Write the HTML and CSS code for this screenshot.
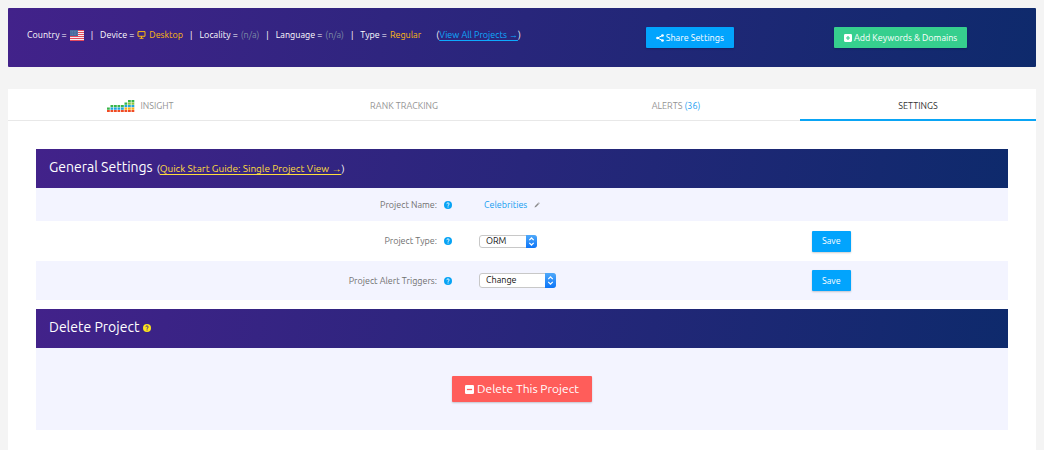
FILE: index.html
```html
<!DOCTYPE html>
<html lang="en">
<head>
<meta charset="utf-8">
<title>Project Settings</title>
<link rel="stylesheet" href="styles.css">
</head>
<body>
<svg class="defs" aria-hidden="true">
  <symbol id="help" viewBox="0 0 16 16"><circle cx="8" cy="8" r="8" fill="currentColor"/><path d="M5.6 6.2C5.7 3 10.4 3.2 10.4 6c0 1.7-2.3 1.9-2.3 3.6M8.1 11v2" fill="none" stroke="var(--mark)" stroke-width="1.9"/></symbol>
  <symbol id="updown" viewBox="0 0 8 10"><path d="M2 3.8 4 1.8l2 2M2 6.2l2 2 2-2" fill="none" stroke="#fff" stroke-width="1.1"/></symbol>
</svg>

<header class="topbar">
  <div class="facts">
    <span class="fact">Country =
      <svg class="flag" viewBox="0 0 14 11" role="img" aria-label="United States"><path fill="#f6eef0" d="M0 0h14v11H0z"/><path stroke="#e4495c" d="M0 .5h14M0 2.5h14M0 4.5h14M0 6.5h14M0 8.5h14M0 10.5h14"/><path fill="#47699c" d="M0 0h8v6H0z"/><path stroke="#8fa9c9" stroke-width=".5" stroke-dasharray=".6 1" d="M.7 1.5H8M.7 3H8M.7 4.5H8"/></svg></span>
    <span class="bar">|</span>
    <span class="fact">Device = <span class="gold"><svg class="desktop" viewBox="0 0 18 16" aria-hidden="true"><path d="M2 1.2h14v9.3H2zM9 10.5V14M5 14.6h8" fill="none" stroke="currentColor" stroke-width="2"/></svg> Desktop</span></span>
    <span class="bar">|</span>
    <span class="fact">Locality = <span class="none">(n/a)</span></span>
    <span class="bar">|</span>
    <span class="fact">Language = <span class="none">(n/a)</span></span>
    <span class="bar">|</span>
    <span class="fact">Type = <span class="gold">Regular</span></span>
    <span class="all">(<a href="#projects">View All Projects →</a>)</span>
  </div>
  <div class="action"><button class="btn blue" type="button"><svg class="share" viewBox="0 0 16 16" aria-hidden="true"><path d="M13 3 3 8l10 5" fill="none" stroke="currentColor" stroke-width="2"/><g fill="currentColor"><circle cx="13" cy="3" r="2.7"/><circle cx="3" cy="8" r="2.7"/><circle cx="13" cy="13" r="2.7"/></g></svg>Share Settings</button></div>
  <div class="action"><button class="btn green" type="button"><svg class="square" viewBox="0 0 14 14" aria-hidden="true"><rect width="14" height="14" rx="2" fill="#fff"/><path d="M7 3.5v7M3.5 7h7" stroke="#36cf8e" stroke-width="2"/></svg>Add Keywords &amp; Domains</button></div>
</header>

<main class="panel">
  <nav class="tabs">
    <a class="tab" href="#insight"><svg class="chart" viewBox="0 0 28 12" aria-hidden="true"><g fill="none" stroke-width="2.1" stroke-dasharray="2.8 .7"><path stroke="#f04b23" d="M0 11h28"/><path stroke="#39b54a" d="M0 8.6h3M3.5 6.1h14M17.5 3.6h3M21 1.1h7"/><path stroke="#1da6e0" d="M3.5 8.6h14M17.5 6.1h10.5"/><path stroke="#fbb017" d="M17.5 8.6H28"/><path stroke="#8cc63f" d="M21 3.6h7"/></g></svg>INSIGHT</a>
    <a class="tab" href="#rank">RANK TRACKING</a>
    <a class="tab alerts" href="#alerts">ALERTS&nbsp;<span class="count">(36)</span></a>
    <a class="tab active" href="#settings" aria-current="page">SETTINGS</a>
  </nav>

  <div class="content">
    <section>
      <div class="head"><h2>General Settings</h2><span class="guide">(<a href="#guide">Quick Start Guide: Single Project View →</a>)</span></div>
      <div class="row short tint">
        <div class="label">Project Name: <svg class="help"><use href="#help"/></svg></div>
        <div class="value"><a class="name" href="#name">Celebrities</a><svg class="pencil" viewBox="0 0 12 12" aria-hidden="true"><path d="M1 11l1-3 6-6 2 2-6 6zM8.7 1.3l.8-.8 2 2-.8.8z" fill="#8a8a8a"/></svg></div>
      </div>
      <div class="row">
        <div class="label"><label for="type">Project Type:</label> <svg class="help"><use href="#help"/></svg></div>
        <div class="value"><span class="pick type"><select id="type"><option>ORM</option></select><svg class="arrows" aria-hidden="true"><use href="#updown"/></svg></span></div>
        <div class="save"><button class="btn blue" type="button">Save</button></div>
      </div>
      <div class="row last tint">
        <div class="label"><label for="triggers">Project Alert Triggers:</label> <svg class="help"><use href="#help"/></svg></div>
        <div class="value"><span class="pick triggers"><select id="triggers"><option>Change</option></select><svg class="arrows" aria-hidden="true"><use href="#updown"/></svg></span></div>
        <div class="save"><button class="btn blue" type="button">Save</button></div>
      </div>
    </section>
    <section>
      <div class="head"><h2>Delete Project</h2><svg class="help yellow"><use href="#help"/></svg></div>
      <div class="danger tint"><button class="btn red" type="button"><svg class="square" viewBox="0 0 14 14" aria-hidden="true"><rect width="14" height="14" rx="2" fill="#fff"/><path d="M3 7h8" stroke="#ff5d5a" stroke-width="2"/></svg>Delete This Project</button></div>
    </section>
  </div>
</main>
</body>
</html>
```
FILE: styles.css
```css
* { box-sizing: border-box; }
body {
  margin: 0;
  padding: 8px 8px 0;
  min-height: 100vh;
  display: flex;
  flex-direction: column;
  background: #f4f4f4;
  color: #707070;
  font: 9px/12px Ubuntu, "Noto Sans", sans-serif;
}
a { color: inherit; text-decoration: none; }
svg { flex: none; }
.defs { position: absolute; width: 0; height: 0; }

.topbar {
  display: grid;
  grid-template-columns: 558fr 211fr 211fr;
  align-items: start;
  padding: 19px 30px 19px 19px;
  margin-bottom: 22px;
  border-radius: 1px;
  color: #fff;
  background: linear-gradient(100deg, #42228a, #0e2a6c);
}
.facts { display: flex; padding-top: 2px; white-space: nowrap; }
.fact { display: flex; align-items: center; gap: 3px; }
.bar { padding: 0 7px; }
.gold { display: inline-flex; align-items: center; gap: 3px; color: #ffb90f; }
.none { color: #7c8ba6; }
.all { margin-left: 15px; }
.all a { color: #0eaaff; }
.all a, .guide a { text-decoration: underline; text-underline-offset: 2px; }
.flag { width: 14px; height: 11px; }
.desktop { width: 9px; height: 8px; }
.action { display: flex; justify-content: center; }

.btn {
  display: flex;
  align-items: center;
  gap: 2px;
  height: 21px;
  padding: 0 10px;
  border: 0;
  border-radius: 1px;
  color: #fff;
  font: inherit;
  white-space: nowrap;
  box-shadow: 0 1px 2px rgba(0, 0, 0, .2);
}
.blue { background: #02a4fd; }
.green { background: #36cf8e; }
.red { height: 26px; padding: 0 13px; gap: 3px; background: #ff5d5a; font-size: 12px; }
.share { width: 8px; height: 8px; }
.square { width: 8px; height: 8px; }
.red .square { width: 9px; height: 9px; }

.panel { flex: 1; background: #fff; }
.tabs { display: grid; grid-template-columns: 264fr 264fr 264fr 236fr; }
.tab {
  display: flex;
  align-items: center;
  justify-content: center;
  height: 32px;
  padding-top: 2px;
  border-bottom: 1px solid #e8e8e8;
  color: #939393;
}
.tab.alerts { padding-left: 16px; }
.tab.active { color: #333; border-color: #0aa5f5; box-shadow: inset 0 -1px #0aa5f5; }
.count { color: #1b9df2; }
.chart { width: 28px; height: 12px; margin-right: 6px; }

.content { display: grid; gap: 9px; padding: 28px 28px 20px; }
.head {
  display: flex;
  align-items: baseline;
  gap: 4px;
  height: 39px;
  padding: 8px 13px;
  color: #fff;
  background: linear-gradient(100deg, #42228a, #0e2a6c);
}
h2 { margin: 0; font-size: 14px; line-height: 20px; font-weight: 400; }
.guide { font-size: 10px; }
.guide a { color: #ffdd3c; }
.row {
  display: grid;
  grid-template-columns: 416fr 354fr 202fr;
  align-items: center;
  height: 40px;
}
.row.short { height: 33px; }
.row.last { height: 39px; }
.tint { background: #f3f4ff; }
.label { display: flex; align-items: center; justify-content: flex-end; gap: 7px; }
.help { width: 8px; height: 8px; color: #06a3f5; --mark: #fff; }
.help.yellow { color: #fbe31d; --mark: #42228a; }
.value { display: flex; align-items: center; padding-left: 27px; }
.name { margin-left: 5px; color: #129cf0; }
.pencil { width: 6px; height: 6px; margin-left: 7px; }
.pick { position: relative; }
.pick select {
  display: block;
  appearance: none;
  width: 100%;
  height: 100%;
  padding: 0 6px;
  border: 1px solid #c8c8c8;
  border-radius: 3px;
  background: #fff;
  color: #111;
  font: inherit;
  line-height: 11px;
}
.type { width: 58px; height: 13px; }
.triggers { width: 77px; height: 15px; }
.arrows {
  position: absolute;
  top: 0;
  right: 0;
  width: 11px;
  height: 100%;
  padding: 1px;
  border-radius: 0 3px 3px 0;
  background: linear-gradient(#4fa9fa, #0c75f8);
}
.save { display: flex; padding-left: 6px; }
.danger { display: flex; align-items: center; justify-content: center; height: 82px; }
```
